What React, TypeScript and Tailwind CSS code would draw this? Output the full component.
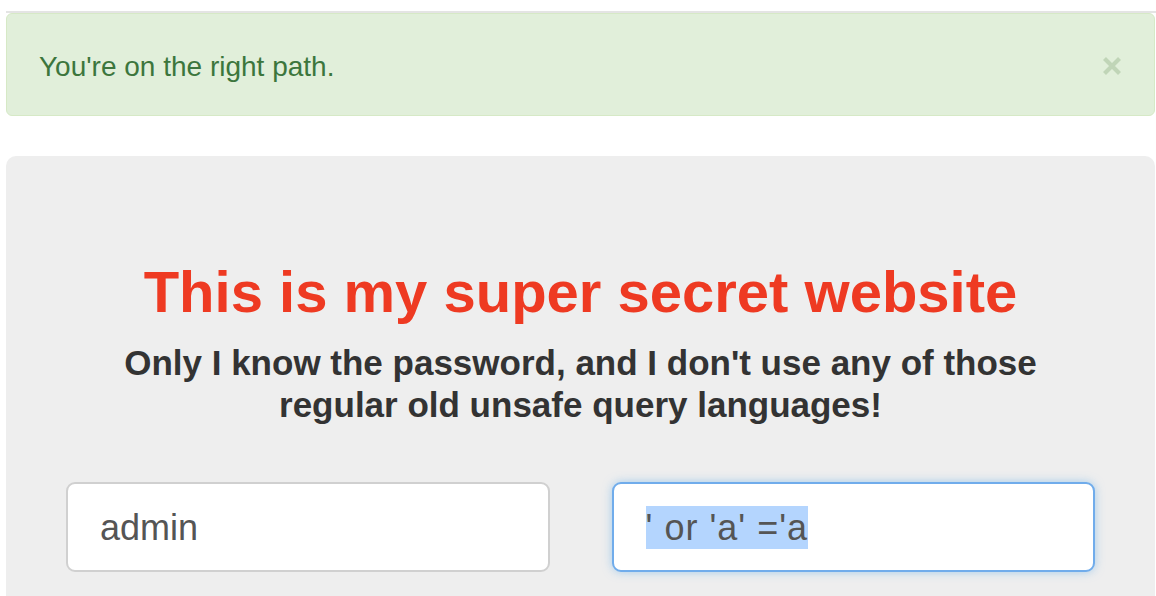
import React from "react";

export default function App() {
  return (
    <div className="w-[1156px] h-[596px] overflow-hidden bg-white font-['Liberation_Sans',Arial,sans-serif]">
      <div className="pt-[11px] pl-[6px]">
        <div className="h-[2px] bg-[#e4e4e4]" />
        <div className="flex items-center justify-between rounded-[6px] border border-[#d6e9c6] bg-[#e1efda] pl-[32px] pr-[32px] pt-[35px] pb-[31px] text-[28px] leading-[35px] text-[#3c763d] mr-[1px]">
          <span>You're on the right path.</span>
          <svg width="20" height="20" viewBox="0 0 20 20" className="mt-[-2px]">
            <path d="M2.5 2.5 L17.5 17.5 M17.5 2.5 L2.5 17.5" stroke="#c0d5b7" strokeWidth="4.2" strokeLinecap="butt" />
          </svg>
        </div>
      </div>
      <div className="mt-[40px] ml-[6px] mr-[1px] rounded-t-[10px] bg-[#eeeeee] pt-[104px] px-[60px] pb-[40px]">
        <h1 className="text-center text-[58px] leading-[64px] font-bold text-[#ee3a22]">
          This is my super secret website
        </h1>
        <p className="mt-[18px] text-center text-[35px] leading-[42px] font-bold text-[#333333]">
          Only I know the password, and I don't use any of those
          <br />
          regular old unsafe query languages!
        </p>
        <div className="mt-[56px] grid grid-cols-2 gap-[62px]">
          <div className="h-[90px] rounded-[9px] border-2 border-[#d0d0d0] bg-white flex items-center pl-[32px] text-[36px] leading-[43px] text-[#555555]">
            admin
          </div>
          <div className="h-[90px] rounded-[9px] border-2 border-[#70aceb] bg-white flex items-center pl-[32px] text-[36px] leading-[43px] text-[#555555] shadow-[0_0_10px_rgba(102,175,233,0.55)]">
            <span className="bg-[#b4d5fe] tracking-[1px]">' or 'a' ='a</span>
          </div>
        </div>
      </div>
    </div>
  );
}
